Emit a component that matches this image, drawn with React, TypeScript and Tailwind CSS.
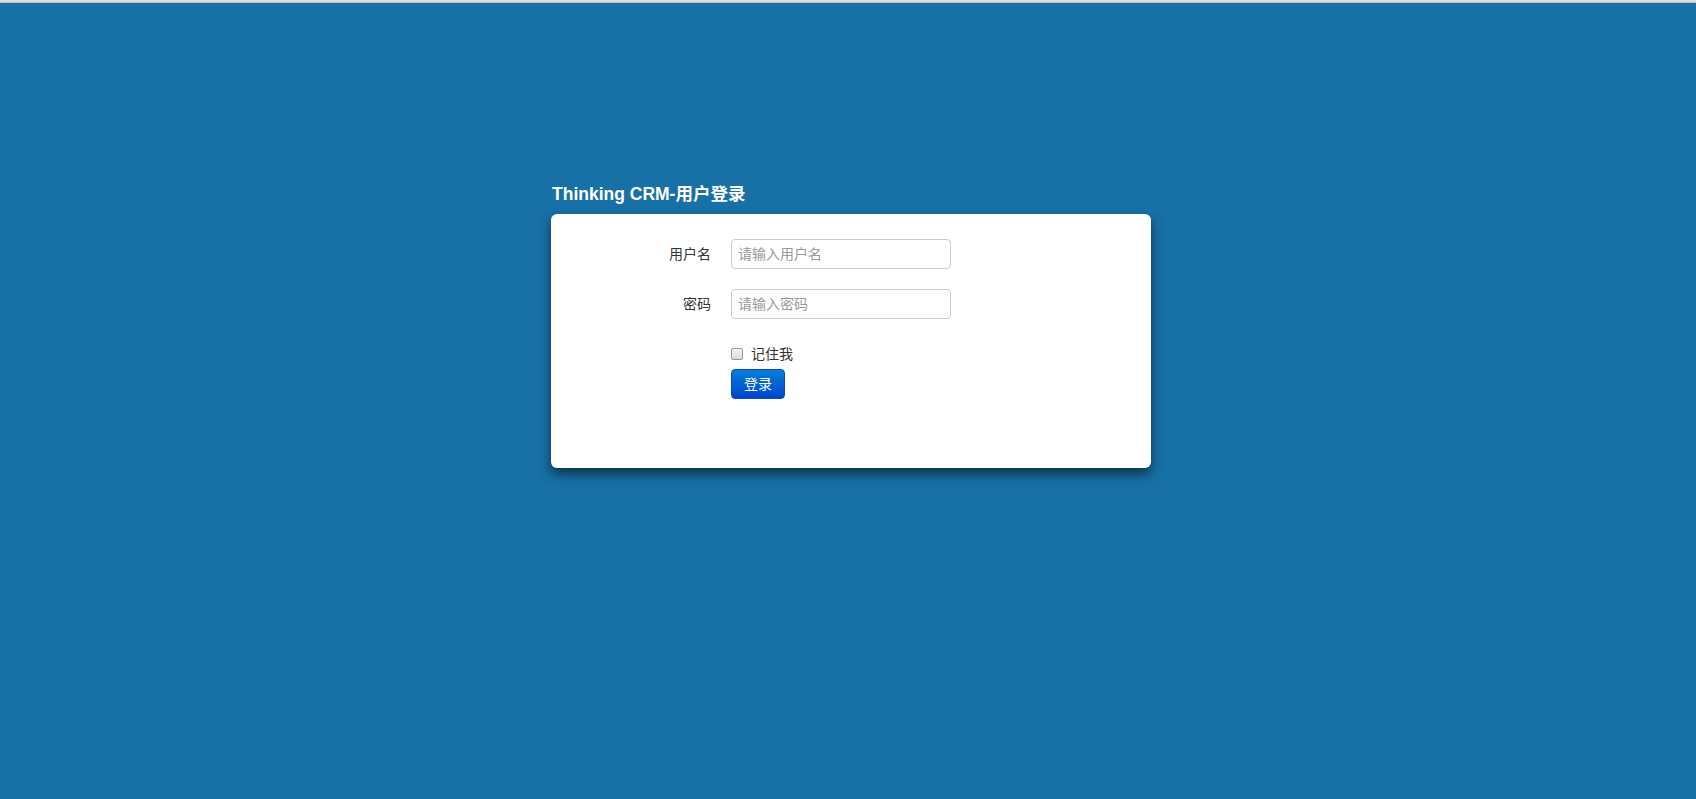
import React from "react";

const font = { fontFamily: '"Liberation Sans", Arial, "Noto Sans CJK SC", sans-serif' };

export default function App() {
  return (
    <div className="min-h-[799px] w-full bg-[#1770a6]" style={font}>
      <div className="h-[2px] bg-[#dedede]" />
      <div className="h-[1px] bg-[#bdbdbd]" />
      <div className="flex justify-center pl-[6px] pt-[181px]">
        <div className="w-[600px]">
          <h1 className="pl-[1px] text-[17.5px] leading-[20px] font-bold text-white">Thinking CRM-用户登录</h1>
          <div className="mt-[10px] h-[254px] rounded-[6px] bg-white pt-[25px] shadow-[0_6px_12px_rgba(0,0,0,0.55)]">
            <div className="flex items-center">
              <label className="w-[160px] text-right text-[14px] text-[#333]">用户名</label>
              <input
                className="ml-[20px] h-[30px] w-[220px] rounded-[4px] border border-[#cccccc] px-[6px] text-[14px] text-[#555] outline-none placeholder:text-[#999]"
                placeholder="请输入用户名"
              />
            </div>
            <div className="mt-[20px] flex items-center">
              <label className="w-[160px] text-right text-[14px] text-[#333]">密码</label>
              <input
                type="password"
                className="ml-[20px] h-[30px] w-[220px] rounded-[4px] border border-[#cccccc] px-[6px] text-[14px] text-[#555] outline-none placeholder:text-[#999]"
                placeholder="请输入密码"
              />
            </div>
            <div className="ml-[180px] mt-[25px] flex h-[20px] items-center">
              <span className="h-[12px] w-[12px] rounded-[2px] border border-[#9a9a9a] bg-gradient-to-b from-[#f4f4f4] to-[#dcdcdc]" />
              <span className="ml-[8px] text-[14px] text-[#333]">记住我</span>
            </div>
            <div className="ml-[180px] mt-[5px]">
              <button className="h-[30px] w-[54px] rounded-[4px] border border-[#0a47b8] bg-gradient-to-b from-[#0a7ed8] to-[#0044cc] text-[14px] text-white">
                登录
              </button>
            </div>
          </div>
        </div>
      </div>
    </div>
  );
}
